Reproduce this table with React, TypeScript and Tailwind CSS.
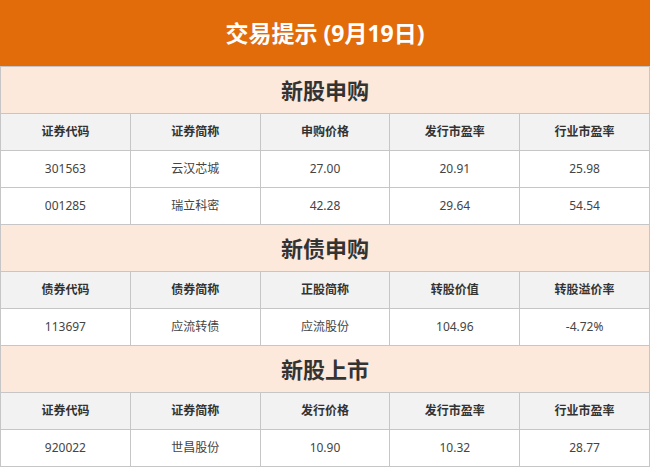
import React from 'react';

type Section = {
  title: string;
  headers: string[];
  rows: string[][];
};

const sections: Section[] = [
  {
    title: '新股申购',
    headers: ['证券代码', '证券简称', '申购价格', '发行市盈率', '行业市盈率'],
    rows: [
      ['301563', '云汉芯城', '27.00', '20.91', '25.98'],
      ['001285', '瑞立科密', '42.28', '29.64', '54.54'],
    ],
  },
  {
    title: '新债申购',
    headers: ['债券代码', '债券简称', '正股简称', '转股价值', '转股溢价率'],
    rows: [['113697', '应流转债', '应流股份', '104.96', '-4.72%']],
  },
  {
    title: '新股上市',
    headers: ['证券代码', '证券简称', '发行价格', '发行市盈率', '行业市盈率'],
    rows: [['920022', '世昌股份', '10.90', '10.32', '28.77']],
  },
];

export default function App() {
  return (
    <div
      className="w-[650px] h-[468px] bg-white overflow-hidden"
      style={{ fontFamily: '"Noto Sans", "Noto Sans CJK SC", sans-serif' }}
    >
      {/* Title bar */}
      <div className="h-[66px] bg-[#e36c0a] flex items-center justify-center">
        <h1 className="text-white text-[23px] font-bold">交易提示 (9月19日)</h1>
      </div>

      <table className="w-[650px] table-fixed border-collapse">
        <tbody>
          {sections.map((section) => (
            <React.Fragment key={section.title}>
              <tr className="h-[47px] bg-[#fde9db]">
                <td
                  colSpan={5}
                  className="border border-[#c6c6c6] text-center text-[22px] font-bold text-[#333333]"
                >
                  {section.title}
                </td>
              </tr>
              <tr className="h-[37px] bg-[#f2f2f2]">
                {section.headers.map((h, i) => (
                  <th
                    key={i}
                    className="border border-[#c6c6c6] text-center text-[12px] font-bold text-[#333333]"
                  >
                    {h}
                  </th>
                ))}
              </tr>
              {section.rows.map((row, r) => (
                <tr key={r} className="h-[37px] bg-white">
                  {row.map((cell, i) => (
                    <td
                      key={i}
                      className="border border-[#c6c6c6] text-center text-[12px] text-[#444444]"
                    >
                      {cell}
                    </td>
                  ))}
                </tr>
              ))}
            </React.Fragment>
          ))}
        </tbody>
      </table>
    </div>
  );
}
